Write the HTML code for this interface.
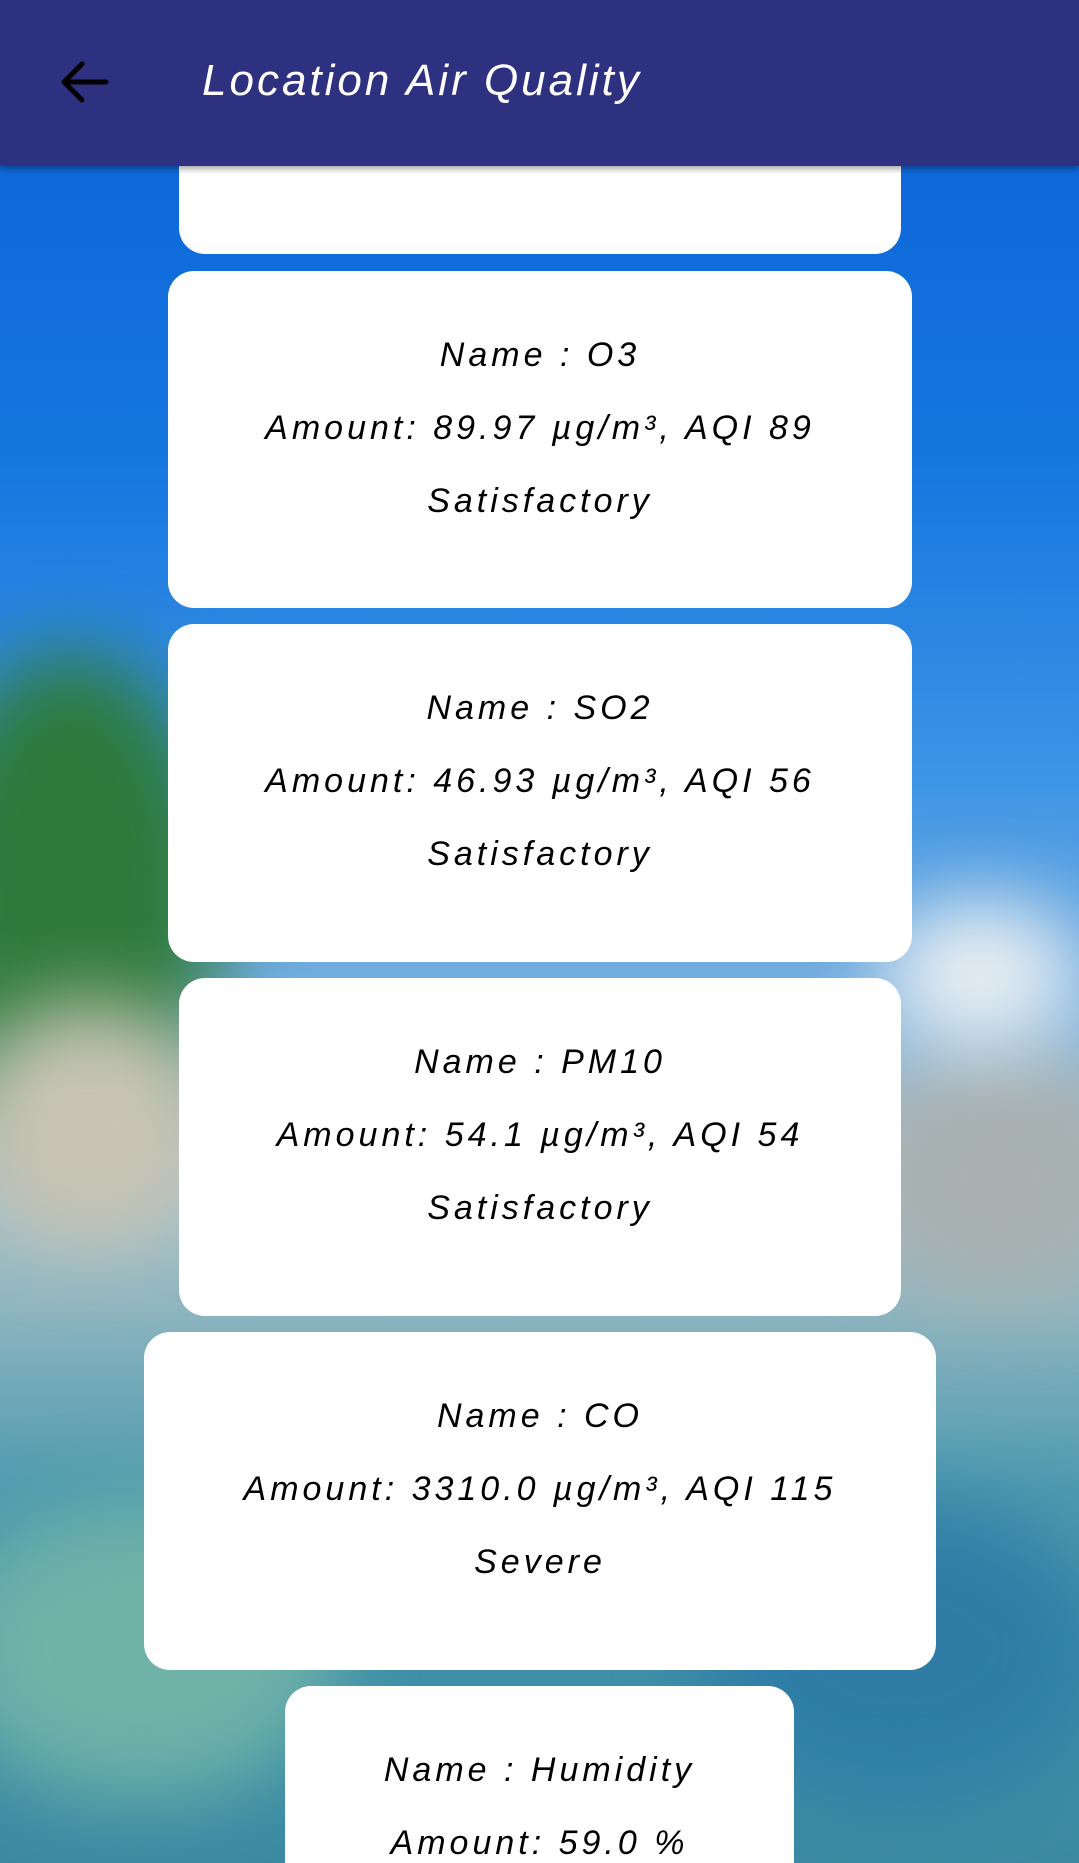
<!DOCTYPE html>
<html><head><meta charset="utf-8"><style>
html,body{margin:0;padding:0;width:1079px;height:1863px;overflow:hidden;font-family:"Liberation Sans",sans-serif;}
#wrap{position:relative;width:1079px;height:1863px;overflow:hidden;}
.bg{position:absolute;inset:0;background:linear-gradient(180deg,#0b5fd6 0%,#1677e0 25%,#3f95e6 42%,#7fb3dc 55%,#a9c3cf 62%,#8fb6c0 70%,#4e9ab0 80%,#3f8fa8 90%,#3b8aa2 100%);}
.blob{position:absolute;border-radius:50%;filter:blur(40px);}
.hdr{position:absolute;left:0;top:0;width:1079px;height:166px;background:#2e3180;box-shadow:0 3px 6px rgba(0,0,0,.35);z-index:5}
.hdr .t{position:absolute;left:202px;top:56px;color:#fff;font-size:44px;font-style:italic;letter-spacing:3px}
.card{position:absolute;background:#fff;border-radius:26px;text-align:center;color:#000;font-size:34px;font-style:italic;letter-spacing:4px}
.card div{height:73px;line-height:73px}
</style></head><body><div id="wrap">
<div class="bg"></div>
<div class="blob" style="left:-80px;top:650px;width:300px;height:500px;background:#2d7a3a;"></div>
<div class="blob" style="left:-40px;top:1000px;width:260px;height:250px;background:#c8c4b4;"></div>
<div class="blob" style="left:850px;top:1050px;width:300px;height:250px;background:#a8b0b0;"></div>
<div class="blob" style="left:880px;top:900px;width:200px;height:150px;background:#e8eef2;"></div>
<div class="blob" style="left:-60px;top:1500px;width:400px;height:300px;background:#6fb2a8;"></div>
<div class="blob" style="left:700px;top:1500px;width:400px;height:300px;background:#2f7da6;"></div>
<div class="hdr"><svg style="position:absolute;left:58px;top:60px" width="52" height="44" viewBox="0 0 52 44"><path d="M48 22H6M24 4L6 22l18 18" fill="none" stroke="#000" stroke-width="5" stroke-linecap="round" stroke-linejoin="round"/></svg><div class="t">Location Air Quality</div></div>
<div class="card" style="left:179px;top:140px;width:722px;height:114px"></div>
<div class="card" style="left:168px;top:271px;width:744px;height:337px;padding-top:48px;box-sizing:border-box"><div>Name : O3</div><div>Amount: 89.97 µg/m³, AQI 89</div><div>Satisfactory</div></div>
<div class="card" style="left:168px;top:624px;width:744px;height:338px;padding-top:48px;box-sizing:border-box"><div>Name : SO2</div><div>Amount: 46.93 µg/m³, AQI 56</div><div>Satisfactory</div></div>
<div class="card" style="left:179px;top:978px;width:722px;height:338px;padding-top:48px;box-sizing:border-box"><div>Name : PM10</div><div>Amount: 54.1 µg/m³, AQI 54</div><div>Satisfactory</div></div>
<div class="card" style="left:144px;top:1332px;width:792px;height:338px;padding-top:48px;box-sizing:border-box"><div>Name : CO</div><div>Amount: 3310.0 µg/m³, AQI 115</div><div>Severe</div></div>
<div class="card" style="left:285px;top:1686px;width:509px;height:177px;padding-top:48px;box-sizing:border-box;border-radius:26px 26px 0 0;overflow:hidden"><div>Name : Humidity</div><div>Amount: 59.0 %</div></div>
</div></body></html>
